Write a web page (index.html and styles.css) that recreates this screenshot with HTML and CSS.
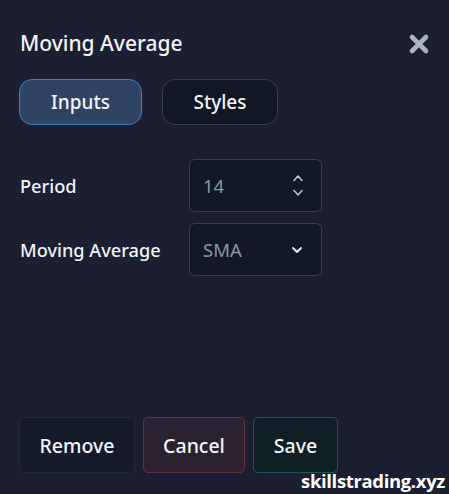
FILE: index.html
```html
<!DOCTYPE html>
<html lang="en">
<head>
<meta charset="utf-8">
<title>Moving Average</title>
<link rel="stylesheet" href="styles.css">
</head>
<body>
<div class="dialog">
  <header class="dialog-head">
    <h1 class="dialog-title">Moving Average</h1>
    <button class="close" aria-label="Close">
      <svg width="22" height="22" viewBox="0 0 22 22"><path d="M4 4 L18 18 M18 4 L4 18" stroke="#aab3c6" stroke-width="4.6" stroke-linecap="round"/></svg>
    </button>
  </header>

  <nav class="tabs">
    <button class="tab tab-active">Inputs</button>
    <button class="tab">Styles</button>
  </nav>

  <section class="fields">
    <div class="field">
      <label class="field-label">Period</label>
      <div class="control">
        <span class="control-value">14</span>
        <span class="spinner">
          <svg width="12" height="8" viewBox="0 0 12 8"><path d="M2 6.5 L6 2 L10 6.5" fill="none" stroke="#c9d0dc" stroke-width="1.4" stroke-linecap="round" stroke-linejoin="round"/></svg>
          <svg width="12" height="8" viewBox="0 0 12 8"><path d="M2 1.5 L6 6 L10 1.5" fill="none" stroke="#c9d0dc" stroke-width="1.4" stroke-linecap="round" stroke-linejoin="round"/></svg>
        </span>
      </div>
    </div>
    <div class="field">
      <label class="field-label">Moving Average</label>
      <div class="control">
        <span class="control-value">SMA</span>
        <svg class="caret" width="14" height="10" viewBox="0 0 14 10"><path d="M3 3 L7 7 L11 3" fill="none" stroke="#e6eaf1" stroke-width="2" stroke-linecap="round" stroke-linejoin="round"/></svg>
      </div>
    </div>
  </section>

  <footer class="actions">
    <button class="btn btn-remove">Remove</button>
    <button class="btn btn-cancel">Cancel</button>
    <button class="btn btn-save">Save</button>
  </footer>

  <div class="brand">skillstrading.xyz</div>
</div>
</body>
</html>
```

FILE: styles.css
```css
* {
  box-sizing: border-box;
}

html,
body {
  margin: 0;
  padding: 0;
  background: #1b1f31;
}

body {
  font-family: "Noto Sans", "DejaVu Sans", sans-serif;
  font-weight: 500;
  color: #eef1f6;
}

.dialog {
  position: relative;
  height: 494px;
  padding: 29px 19px 21px 19px;
  display: flex;
  flex-direction: column;
}

.dialog-head {
  display: flex;
  justify-content: space-between;
  align-items: center;
  height: 29px;
}

.dialog-title {
  margin: 0 0 0 1px;
  font-size: 21px;
  font-weight: 500;
  line-height: 29px;
  color: #f1f3f7;
}

.close {
  border: 0;
  background: none;
  padding: 0;
  width: 22px;
  height: 22px;
  display: flex;
}

.tabs {
  display: flex;
  gap: 20px;
  margin-top: 21px;
}

.tab {
  height: 46px;
  border-radius: 13px;
  font-family: inherit;
  font-weight: 500;
  font-size: 19px;
  color: #f2f4f8;
  background: #121726;
  border: 1.5px solid #3a4052;
  width: 116px;
  padding: 0;
}

.tab-active {
  width: 123px;
  background: #2e4462;
  border-color: #3b80c2;
}

.fields {
  margin-top: 34px;
  display: flex;
  flex-direction: column;
  gap: 11px;
}

.field {
  display: flex;
  align-items: center;
}

.field-label {
  width: 170px;
  padding-left: 1px;
  font-size: 18.2px;
  color: #f1f3f7;
}

.control {
  width: 133px;
  height: 53px;
  border-radius: 6px;
  background: #121827;
  border: 1.5px solid #394254;
  display: flex;
  align-items: center;
  justify-content: space-between;
  padding: 0 18px 0 13px;
}

.control-value {
  font-size: 18.5px;
  font-weight: 400;
  color: #8b95a9;
}

.spinner {
  display: flex;
  flex-direction: column;
  gap: 7px;
  margin-right: -1px;
}

.spinner svg,
.caret {
  display: block;
}

.caret {
  margin-right: -1px;
}

.actions {
  margin-top: auto;
  display: flex;
  gap: 8px;
}

.btn {
  height: 56px;
  border-radius: 5px;
  font-family: inherit;
  font-weight: 500;
  font-size: 19.5px;
  color: #f2f4f8;
  padding: 0;
}

.btn-remove {
  width: 116px;
  background: #161b2b;
  border: 1.5px solid #232a3b;
}

.btn-cancel {
  width: 102px;
  background: #2c2131;
  border: 1.5px solid #6c2e3e;
}

.btn-save {
  width: 85px;
  background: #0f2127;
  border: 1.5px solid #1d5a56;
}

/* site watermark over the bottom-right corner */
.brand {
  position: absolute;
  right: 4px;
  bottom: 1px;
  font-family: "Open Sans", "Noto Sans", sans-serif;
  font-weight: 700;
  font-size: 18.5px;
  letter-spacing: -0.35px;
  color: #ffffff;
}
```
